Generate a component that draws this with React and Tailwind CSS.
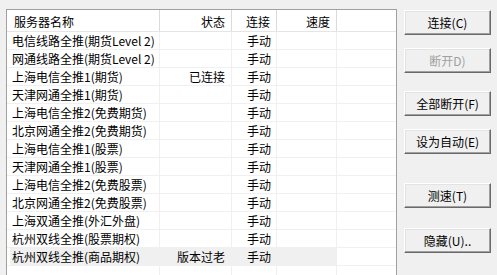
import React from 'react';

const servers = [
    { name: '电信线路全推(期货Level 2)', status: '', mode: '手动' },
    { name: '网通线路全推(期货Level 2)', status: '', mode: '手动' },
    { name: '上海电信全推1(期货)', status: '已连接', mode: '手动' },
    { name: '天津网通全推1(期货)', status: '', mode: '手动' },
    { name: '上海电信全推2(免费期货)', status: '', mode: '手动' },
    { name: '北京网通全推2(免费期货)', status: '', mode: '手动' },
    { name: '上海电信全推1(股票)', status: '', mode: '手动' },
    { name: '天津网通全推1(股票)', status: '', mode: '手动' },
    { name: '上海电信全推2(免费股票)', status: '', mode: '手动' },
    { name: '北京网通全推2(免费股票)', status: '', mode: '手动' },
    { name: '上海双通全推(外汇外盘)', status: '', mode: '手动' },
    { name: '杭州双线全推(股票期权)', status: '', mode: '手动' },
    { name: '杭州双线全推(商品期权)', status: '版本过老', mode: '手动', selected: true },
];

const buttons = [
    { label: '连接(C)', mt: 'mt-[10px]' },
    { label: '断开D)', mt: 'mt-[13px]', disabled: true },
    { label: '全部断开(F)', mt: 'mt-[18px]' },
    { label: '设为自动(E)', mt: 'mt-[13px]' },
    { label: '测速(T)', mt: 'mt-[29px]' },
    { label: '隐藏(U)..', mt: 'mt-[20px]' },
];

function Row({ item }) {
    const sel = item.selected ? 'bg-[#f0f0f0]' : '';
    return (
        <div className="flex h-[18px] border-b border-[#f0f0f0] text-[12px] leading-[17px] text-black">
            <div className="w-[153px] pl-[3px] border-r border-[#f0f0f0]">
                <div className={`h-full pl-[2px] whitespace-nowrap ${sel}`}>{item.name}</div>
            </div>
            <div className={`w-[72px] pr-[6px] text-right border-r border-[#f0f0f0] ${sel}`}>{item.status}</div>
            <div className={`w-[45px] pl-[15px] border-r border-[#f0f0f0] ${sel}`}>{item.mode}</div>
            <div className={`w-[60px] border-r border-[#f0f0f0] ${sel}`}></div>
            <div className="flex-1"></div>
        </div>
    );
}

export default function App() {
    return (
        <div
            className="w-[497px] h-[275px] bg-[#f0f0f0] flex overflow-hidden"
            style={{ fontFamily: '"Noto Sans CJK SC", "Noto Sans", sans-serif' }}
        >
            {/* 服务器列表 */}
            <div className="ml-[6px] mt-[9px] w-[391px] h-[300px] border border-[#a0a0a0] bg-white shrink-0">
                <div className="flex h-[22px] border-b border-[#e5e5e5] text-[12px] leading-[19px] text-black">
                    <div className="w-[153px] pl-[7px] pt-[2px] border-r border-[#dadada]">服务器名称</div>
                    <div className="w-[72px] pr-[6px] pt-[2px] text-right border-r border-[#dadada]">状态</div>
                    <div className="w-[45px] pl-[14px] pt-[2px] border-r border-[#dadada]">连接</div>
                    <div className="w-[60px] pr-[6px] pt-[2px] text-right border-r border-[#dadada]">速度</div>
                    <div className="flex-1"></div>
                </div>
                {servers.map((s) => (
                    <Row key={s.name} item={s} />
                ))}
                <Row item={{ name: '', status: '', mode: '' }} />
            </div>

            {/* 按钮 */}
            <div className="ml-[7px] flex flex-col">
                {buttons.map((b) => (
                    <button
                        key={b.label}
                        disabled={b.disabled}
                        className={`${b.mt} w-[87px] h-[25px] bg-[#f0f0f0] border border-t-white border-l-white border-r-[#696969] border-b-[#696969] shadow-[inset_-1px_-1px_#a0a0a0,inset_1px_1px_#e3e3e3] text-[12px] leading-none ${b.disabled ? 'text-[#a0a0a0]' : 'text-black'}`}
                    >
                        {b.label}
                    </button>
                ))}
            </div>
        </div>
    );
}
